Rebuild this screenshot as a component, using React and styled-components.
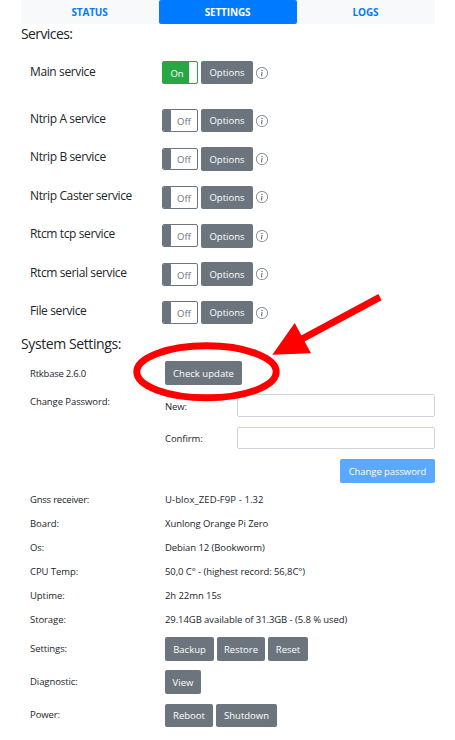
import React from "react";
import styled, { createGlobalStyle } from "styled-components";

const GlobalStyle = createGlobalStyle`
  * { box-sizing: border-box; }
  body {
    margin: 0;
    background: #fff;
    color: #212529;
    font-family: "Open Sans", "Noto Sans", sans-serif;
    font-size: 9.5px;
    line-height: 14px;
  }
`;

const Page = styled.main`
  position: relative;
  width: 455px;
  height: 740px;
  padding: 0 20px 0 21px;
  overflow: hidden;
`;

const Tabs = styled.nav`
  display: grid;
  grid-template-columns: repeat(3, 1fr);
  height: 24px;
  background: #f8f9fa;
`;

const Tab = styled.a`
  display: flex;
  align-items: center;
  justify-content: center;
  padding-right: 1px;
  border-radius: 2px;
  font-weight: 700;
  font-size: 10px;
  letter-spacing: -0.15px;
  color: ${(p) => (p.$active ? "#fff" : "#007bff")};
  background: ${(p) => (p.$active ? "#007bff" : "transparent")};
`;

const Heading = styled.h2`
  margin: 0;
  height: ${(p) => p.$height}px;
  font-size: 14px;
  font-weight: 400;
  line-height: 20px;
  letter-spacing: ${(p) => p.$spacing}px;
`;

const ServiceList = styled.section`
  padding-left: 9px;
`;

const ServiceRow = styled.div`
  display: grid;
  grid-template-columns: 132px 39px 55px 12px;
  align-items: start;
  height: ${(p) => p.$height}px;
`;

const ServiceName = styled.span`
  padding-top: ${(p) => p.$top}px;
  font-size: 12px;
  line-height: 20px;
  letter-spacing: -0.38px;
  white-space: nowrap;
`;

const Toggle = styled.div`
  display: flex;
  flex-direction: ${(p) => (p.$on ? "row" : "row-reverse")};
  width: 36px;
  height: ${(p) => p.$height}px;
  margin-top: ${(p) => p.$top || 0}px;
  border: 1px solid ${(p) => (p.$on ? "#28a745" : "#6c757d")};
  border-radius: 2px;
  overflow: hidden;
  color: ${(p) => (p.$on ? "#fff" : "#6c757d")};
  background: ${(p) => (p.$on ? "#28a745" : "#fff")};
`;

const ToggleText = styled.span`
  flex: 1;
  padding: 1px 0 0 ${(p) => (p.$on ? 2 : 0)}px;
  line-height: ${(p) => p.$line}px;
  text-align: center;
`;

const ToggleHandle = styled.span`
  width: 8px;
  border-radius: 1px;
  background: ${(p) => (p.$on ? "#fff" : "#6c757d")};
`;

const Button = styled.button`
  width: ${(p) => p.$width}px;
  height: ${(p) => p.$height || 24}px;
  padding: ${(p) => (p.$height === 23 ? 1 : 2)}px 0 0;
  border: 0;
  border-radius: 2px;
  font: inherit;
  letter-spacing: ${(p) => p.$spacing || 0}px;
  white-space: nowrap;
  color: #fff;
  background: ${(p) => (p.$primary ? "#5aa9ff" : "#6c757d")};
`;

const InfoSvg = styled.svg`
  display: block;
  width: 12px;
  height: 12px;
  margin-top: ${(p) => p.$top}px;
`;

const Settings = styled.section`
  padding-left: 9px;
`;

const SettingRow = styled.div`
  display: grid;
  grid-template-columns: 135px 1fr;
  height: ${(p) => p.$height}px;
`;

const Label = styled.span`
  padding-top: ${(p) => p.$top || 0}px;
  letter-spacing: ${(p) => p.$spacing ?? -0.08}px;
`;

const ButtonGroup = styled.div`
  display: flex;
  align-items: flex-start;
  gap: 3px;
`;

const PasswordForm = styled.form`
  display: flex;
  flex-direction: column;
`;

const Field = styled.label`
  display: grid;
  grid-template-columns: 72px 1fr;
  height: ${(p) => p.$height}px;
`;

const Input = styled.input`
  width: 100%;
  height: ${(p) => p.$height}px;
  border: 1px solid #ced4da;
  border-radius: 2px;
  background: #fff;
  outline: 0;
`;

const Submit = styled.div`
  display: flex;
  justify-content: flex-end;
`;

const Annotation = styled.svg`
  position: absolute;
  inset: 0;
  pointer-events: none;
`;

const services = [
  { name: "Main service", on: true, height: 48, button: 23, toggle: 23, icon: 6 },
  { name: "Ntrip A service", height: 38, button: 23, toggle: 23, icon: 6, nameTop: 0 },
  { name: "Ntrip B service", height: 39, button: 24, toggle: 22, top: 1, icon: 6, nameTop: 0 },
  { name: "Ntrip Caster service", height: 38, button: 23, toggle: 23, icon: 5, nameTop: 0 },
  { name: "Rtcm tcp service", height: 38, button: 24, toggle: 23, icon: 6, nameTop: 0 },
  { name: "Rtcm serial service", height: 39, button: 24, toggle: 23, top: 1, icon: 6 },
  { name: "File service", height: 33, button: 23, toggle: 23, icon: 6, nameTop: 0 },
];

const facts = [
  ["Gnss receiver:", "U-blox_ZED-F9P - 1.32", -0.22, 0.1],
  ["Board:", "Xunlong Orange Pi Zero"],
  ["Os:", "Debian 12 (Bookworm)"],
  ["CPU Temp:", "50,0 C° - (highest record: 56,8C°)"],
  ["Uptime:", "2h 22mn 15s"],
  ["Storage:", "29.14GB available of 31.3GB - (5.8 % used)"],
];

function InfoIcon({ top }) {
  return (
    <InfoSvg $top={top} viewBox="0 0 16 16" fill="#6c757d">
      <path d="M8 15A7 7 0 1 1 8 1a7 7 0 0 1 0 14zm0 1A8 8 0 1 0 8 0a8 8 0 0 0 0 16z" />
      <path d="m8.93 6.588-2.29.287-.082.38.45.083c.294.07.352.176.288.469l-.738 3.468c-.194.897.105 1.319.808 1.319.545 0 1.178-.252 1.465-.598l.088-.416c-.2.176-.492.246-.686.246-.275 0-.375-.193-.304-.533L8.93 6.588zM9 4.5a1 1 0 1 1-2 0 1 1 0 0 1 2 0z" />
    </InfoSvg>
  );
}

function Service({ item }) {
  return (
    <ServiceRow $height={item.height}>
      <ServiceName $top={item.nameTop ?? 1}>{item.name}</ServiceName>
      <Toggle $on={item.on} $top={item.top} $height={item.toggle}>
        <ToggleText $on={item.on} $line={item.toggle - 2}>{item.on ? "On" : "Off"}</ToggleText>
        <ToggleHandle $on={item.on} />
      </Toggle>
      <Button $width={52} $height={item.button}>Options</Button>
      <InfoIcon top={item.icon} />
    </ServiceRow>
  );
}

export default function App() {
  return (
    <>
      <GlobalStyle />
      <Page>
        <Tabs>
          <Tab>STATUS</Tab>
          <Tab $active>SETTINGS</Tab>
          <Tab>LOGS</Tab>
        </Tabs>
        <Heading $height={37} $spacing={-0.6}>Services:</Heading>
        <ServiceList>
          {services.map((s) => <Service key={s.name} item={s} />)}
        </ServiceList>
        <Heading $height={27} $spacing={-0.4}>System Settings:</Heading>
        <Settings>
          <SettingRow $height={33}>
            <Label $top={6} $spacing={-0.23}>Rtkbase 2.6.0</Label>
            <ButtonGroup>
              <Button $width={77} $spacing={0.03}>Check update</Button>
            </ButtonGroup>
          </SettingRow>
          <SettingRow $height={99}>
            <Label $top={1}>Change Password:</Label>
            <PasswordForm>
              <Field $height={33}>
                <Label $top={6}>New:</Label>
                <Input type="password" $height={23} />
              </Field>
              <Field $height={32}>
                <Label $top={5}>Confirm:</Label>
                <Input type="password" $height={22} />
              </Field>
              <Submit>
                <Button type="button" $primary $width={95} $spacing={-0.08}>Change password</Button>
              </Submit>
            </PasswordForm>
          </SettingRow>
          {facts.map(([name, value, nameSpacing, valueSpacing]) => (
            <SettingRow key={name} $height={24}>
              <Label $spacing={nameSpacing}>{name}</Label>
              <Label $spacing={valueSpacing}>{value}</Label>
            </SettingRow>
          ))}
          <SettingRow $height={33}>
            <Label $top={5}>Settings:</Label>
            <ButtonGroup>
              <Button $width={49}>Backup</Button>
              <Button $width={48}>Restore</Button>
              <Button $width={40}>Reset</Button>
            </ButtonGroup>
          </SettingRow>
          <SettingRow $height={34}>
            <Label $top={5}>Diagnostic:</Label>
            <ButtonGroup><Button $width={36}>View</Button></ButtonGroup>
          </SettingRow>
          <SettingRow $height={24}>
            <Label $top={4}>Power:</Label>
            <ButtonGroup>
              <Button $width={48} $height={23}>Reboot</Button>
              <Button $width={61} $height={23}>Shutdown</Button>
            </ButtonGroup>
          </SettingRow>
        </Settings>
        <Annotation width="455" height="740" viewBox="0 0 455 740">
          <ellipse cx="206.5" cy="371.8" rx="69.7" ry="26" fill="none" stroke="#f00" strokeWidth="7" />
          <path d="M380 297.2 301 339.5" stroke="#f00" strokeWidth="7" />
          <path d="M272.3 354.8 294.7 323 311 353.3z" fill="#f00" />
        </Annotation>
      </Page>
    </>
  );
}
